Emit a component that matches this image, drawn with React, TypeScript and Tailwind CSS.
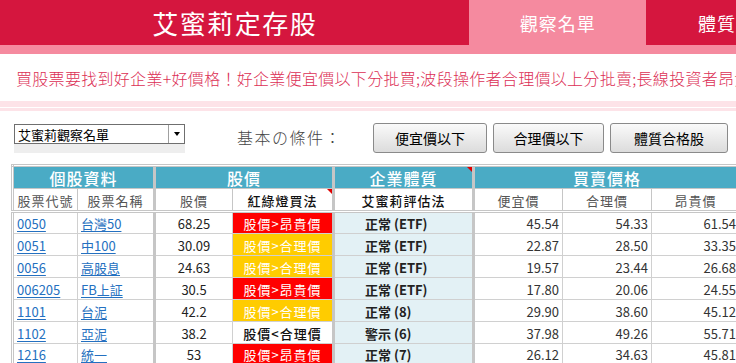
import React from "react";

type Row = {
  code: string;
  name: string;
  price: string;
  light: "red" | "yellow" | "white";
  lightText: string;
  eval: string;
  cheap: string;
  fair: string;
  exp: string;
};

const rows: Row[] = [
  { code: "0050", name: "台灣50", price: "68.25", light: "red", lightText: "股價>昂貴價", eval: "正常 (ETF)", cheap: "45.54", fair: "54.33", exp: "61.54" },
  { code: "0051", name: "中100", price: "30.09", light: "yellow", lightText: "股價>合理價", eval: "正常 (ETF)", cheap: "22.87", fair: "28.50", exp: "33.35" },
  { code: "0056", name: "高股息", price: "24.63", light: "yellow", lightText: "股價>合理價", eval: "正常 (ETF)", cheap: "19.57", fair: "23.44", exp: "26.68" },
  { code: "006205", name: "FB上証", price: "30.5", light: "red", lightText: "股價>昂貴價", eval: "正常 (ETF)", cheap: "17.80", fair: "20.06", exp: "24.55" },
  { code: "1101", name: "台泥", price: "42.2", light: "yellow", lightText: "股價>合理價", eval: "正常 (8)", cheap: "29.90", fair: "38.60", exp: "45.12" },
  { code: "1102", name: "亞泥", price: "38.2", light: "white", lightText: "股價<合理價", eval: "警示 (6)", cheap: "37.98", fair: "49.26", exp: "55.71" },
  { code: "1216", name: "統一", price: "53", light: "red", lightText: "股價>昂貴價", eval: "正常 (7)", cheap: "26.12", fair: "34.63", exp: "45.81" },
];

const font = "font-['Noto_Sans_CJK_TC','Noto_Sans',sans-serif]";

function Note() {
  return (
    <span className="absolute right-0 top-0 h-0 w-0 border-l-[5px] border-t-[5px] border-l-transparent border-t-[#e00000]" />
  );
}

export default function App() {
  return (
    <div className={`${font} w-[736px] h-[363px] overflow-hidden bg-white`}>
      {/* Header */}
      <div className="relative h-[54px] bg-[#f58a9f]">
        <div className="flex h-[45px]">
          <div className="flex w-[473px] items-center justify-center bg-[#d5163e]">
            <span className="text-[26px] leading-none tracking-[1.5px] text-white">艾蜜莉定存股</span>
          </div>
          <div className="flex h-[54px] w-[178px] items-center justify-center bg-[#f58a9f]">
            <span className="-mt-[8px] text-[18px] leading-none tracking-[1px] text-white">觀察名單</span>
          </div>
          <div className="flex flex-1 items-center bg-[#d5163e] pl-[52px]">
            <span className="whitespace-nowrap text-[18px] leading-none tracking-[1px] text-white">體質</span>
          </div>
        </div>
      </div>

      {/* Marquee */}
      <div className="flex h-[47px] items-center overflow-hidden whitespace-nowrap pl-[16px]">
        <span className="text-[16px] font-light tracking-[0.3px] text-[#dc2f55]">
          買股票要找到好企業+好價格！好企業便宜價以下分批買;波段操作者合理價以上分批賣;長線投資者昂貴價以上分批賣
        </span>
      </div>
      <div className="h-[6px] bg-[#fde3e8]" />
      <div className="h-[1px] bg-white" />
      <div className="h-[3px] bg-[#fde3e8]" />

      {/* Controls */}
      <div className="flex h-[53px] items-start">
        <div className="ml-[14px] mt-[13px] flex w-[171px] shrink-0 flex-col">
          <div className="flex h-[20px] items-center border border-[#6f6f6f] bg-white">
            <span className="flex-1 whitespace-nowrap pl-[3px] text-[13px] leading-none text-black">艾蜜莉觀察名單</span>
            <div className="flex h-full w-[16px] items-center justify-center border-l border-[#a0a0a0]">
              <span className="h-0 w-0 border-x-[3.5px] border-t-[4px] border-x-transparent border-t-black" />
            </div>
          </div>
          <div className="h-[9px] bg-[#eeeeee]" />
        </div>
        <div className="ml-[52px] mt-[18px] w-[136px] shrink-0 whitespace-nowrap text-[16px] font-light leading-none tracking-[1.5px] text-[#444]">
          基本の條件：
        </div>
        <div className="mt-[12px] flex shrink-0 gap-[6px]">
          {[
            ["便宜價以下", "w-[114px]"],
            ["合理價以下", "w-[111px]"],
            ["體質合格股", "w-[118px]"],
          ].map(([t, w]) => (
            <button
              key={t}
              className={`${w} h-[30px] rounded-[3px] border border-[#8a8a8a] bg-gradient-to-b from-[#fafafa] to-[#dcdcdc] text-[14px] leading-none text-black`}
            >
              {t}
            </button>
          ))}
        </div>
      </div>

      {/* Table */}
      <div className="pl-[11px]">
        <table className="w-[731px] table-fixed border-collapse border-[3px] border-double border-[#c6c6c6]">
          <colgroup>
            <col className="w-[65px]" />
            <col className="w-[77px]" />
            <col className="w-[78px]" />
            <col className="w-[101px]" />
            <col className="w-[140px]" />
            <col className="w-[89px]" />
            <col className="w-[89px]" />
            <col className="w-[89px]" />
          </colgroup>
          <thead>
            <tr className="h-[23px] bg-[#4aabc5] text-[16px] font-medium tracking-[1px] text-white">
              <th colSpan={2} className="border border-r-[3px] border-[#c6c6c6] border-r-double p-0 font-medium leading-none">個股資料</th>
              <th colSpan={2} className="border border-r-[3px] border-[#c6c6c6] border-r-double p-0 font-medium leading-none">股價</th>
              <th className="relative border border-r-[3px] border-[#c6c6c6] border-r-double p-0 font-medium leading-none">
                企業體質
                <Note />
              </th>
              <th colSpan={3} className="border border-[#c6c6c6] p-0 font-medium leading-none">買賣價格</th>
            </tr>
            <tr className="h-[23px] border-b-[3px] border-double border-b-[#c6c6c6] text-[13px] tracking-[1px]">
              <th className="border border-[#c6c6c6] p-0 align-bottom font-normal text-[#555]">股票代號</th>
              <th className="border border-r-[3px] border-[#c6c6c6] border-r-double p-0 align-bottom font-normal text-[#555]">股票名稱</th>
              <th className="border border-[#c6c6c6] p-0 align-bottom font-normal text-[#555]">股價</th>
              <th className="relative border border-r-[3px] border-[#c6c6c6] border-r-double p-0 align-bottom font-medium text-[#111]">
                紅綠燈買法
                <Note />
              </th>
              <th className="border border-r-[3px] border-[#c6c6c6] border-r-double p-0 align-bottom font-medium text-[#111]">艾蜜莉評估法</th>
              <th className="border border-[#c6c6c6] p-0 align-bottom font-normal text-[#555]">便宜價</th>
              <th className="border border-[#c6c6c6] p-0 align-bottom font-normal text-[#555]">合理價</th>
              <th className="border border-[#c6c6c6] p-0 align-bottom font-normal text-[#555]">昂貴價</th>
            </tr>
          </thead>
          <tbody className="text-[13px]">
            {rows.map((r) => (
              <tr key={r.code} className="h-[22px]">
                <td className="border border-[#d0d0d0] p-0 pl-[3px] align-bottom">
                  <a className="text-[#2470c0] underline underline-offset-2">{r.code}</a>
                </td>
                <td className="border border-r-[3px] border-[#d0d0d0] border-r-double border-r-[#c6c6c6] p-0 pl-[3px] align-bottom">
                  <a className="text-[#2470c0] underline underline-offset-2">{r.name}</a>
                </td>
                <td className="border border-[#d0d0d0] p-0 text-center align-bottom text-[#222]">{r.price}</td>
                <td
                  className={`border border-r-[3px] border-[#d0d0d0] border-r-double border-r-[#c6c6c6] p-0 text-center align-bottom tracking-[1px] ${
                    r.light === "red"
                      ? "bg-[#ff0000] text-white"
                      : r.light === "yellow"
                      ? "bg-[#ffcc00] text-white"
                      : "bg-white font-medium text-[#111]"
                  }`}
                >
                  {r.lightText}
                </td>
                <td className="border border-r-[3px] border-[#d0d0d0] border-r-double border-r-[#c6c6c6] bg-[#e3f1f5] p-0 pl-[30px] align-bottom font-bold text-[#222]">
                  {r.eval}
                </td>
                <td className="border border-[#d0d0d0] p-0 pr-[3px] text-right align-bottom text-[#333]">{r.cheap}</td>
                <td className="border border-[#d0d0d0] p-0 pr-[3px] text-right align-bottom text-[#333]">{r.fair}</td>
                <td className="border border-[#d0d0d0] p-0 pr-[3px] text-right align-bottom text-[#333]">{r.exp}</td>
              </tr>
            ))}
          </tbody>
        </table>
      </div>
    </div>
  );
}
